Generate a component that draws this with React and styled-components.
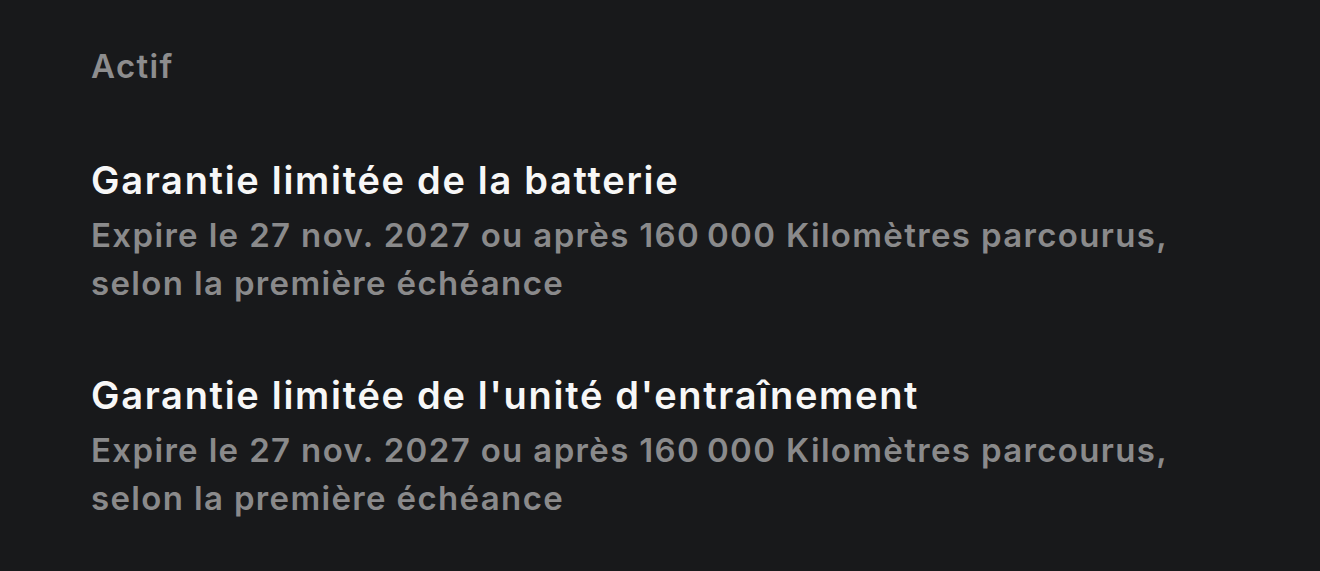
import styled, { createGlobalStyle } from "styled-components";

const GlobalStyle = createGlobalStyle`
    html, body {
        margin: 0;
        padding: 0;
        background: #18191b;
    }
    body {
        font-family: Inter, "Noto Sans", sans-serif;
        -webkit-font-smoothing: antialiased;
    }
`;

const warranties = [
    {
        title: "Garantie limitée de la batterie",
        text: "Expire le 27 nov. 2027 ou après 160\u202f000 Kilomètres parcourus, selon la première échéance",
    },
    {
        title: "Garantie limitée de l'unité d'entraînement",
        text: "Expire le 27 nov. 2027 ou après 160\u202f000 Kilomètres parcourus, selon la première échéance",
    },
];

const App = () => {
    return (
        <Page>
            <GlobalStyle />
            <Heading>Actif</Heading>
            <List>
                {warranties.map((w) => (
                    <Item key={w.title}>
                        <Title>{w.title}</Title>
                        <Text>{w.text}</Text>
                    </Item>
                ))}
            </List>
        </Page>
    );
};

const Page = styled.div`
    min-height: 571px;
    padding: 44px 91px 0;
    box-sizing: border-box;
    background: #18191b;
`;

const Heading = styled.h2`
    margin: 0;
    font-size: 33px;
    line-height: 44px;
    font-weight: 600;
    letter-spacing: 1.4px;
    color: #8d8d8e;
`;

const List = styled.div`
    display: flex;
    flex-direction: column;
    gap: 66px;
    margin-top: 70px;
`;

const Item = styled.div`
    display: flex;
    flex-direction: column;
    gap: 9px;
`;

const Title = styled.div`
    font-size: 38px;
    line-height: 44px;
    font-weight: 600;
    letter-spacing: 1.7px;
    color: #f7f7f7;
`;

const Text = styled.div`
    max-width: 1130px;
    font-size: 33px;
    line-height: 48px;
    font-weight: 600;
    letter-spacing: 1.35px;
    color: #8a8a8b;
`;

export default App;
